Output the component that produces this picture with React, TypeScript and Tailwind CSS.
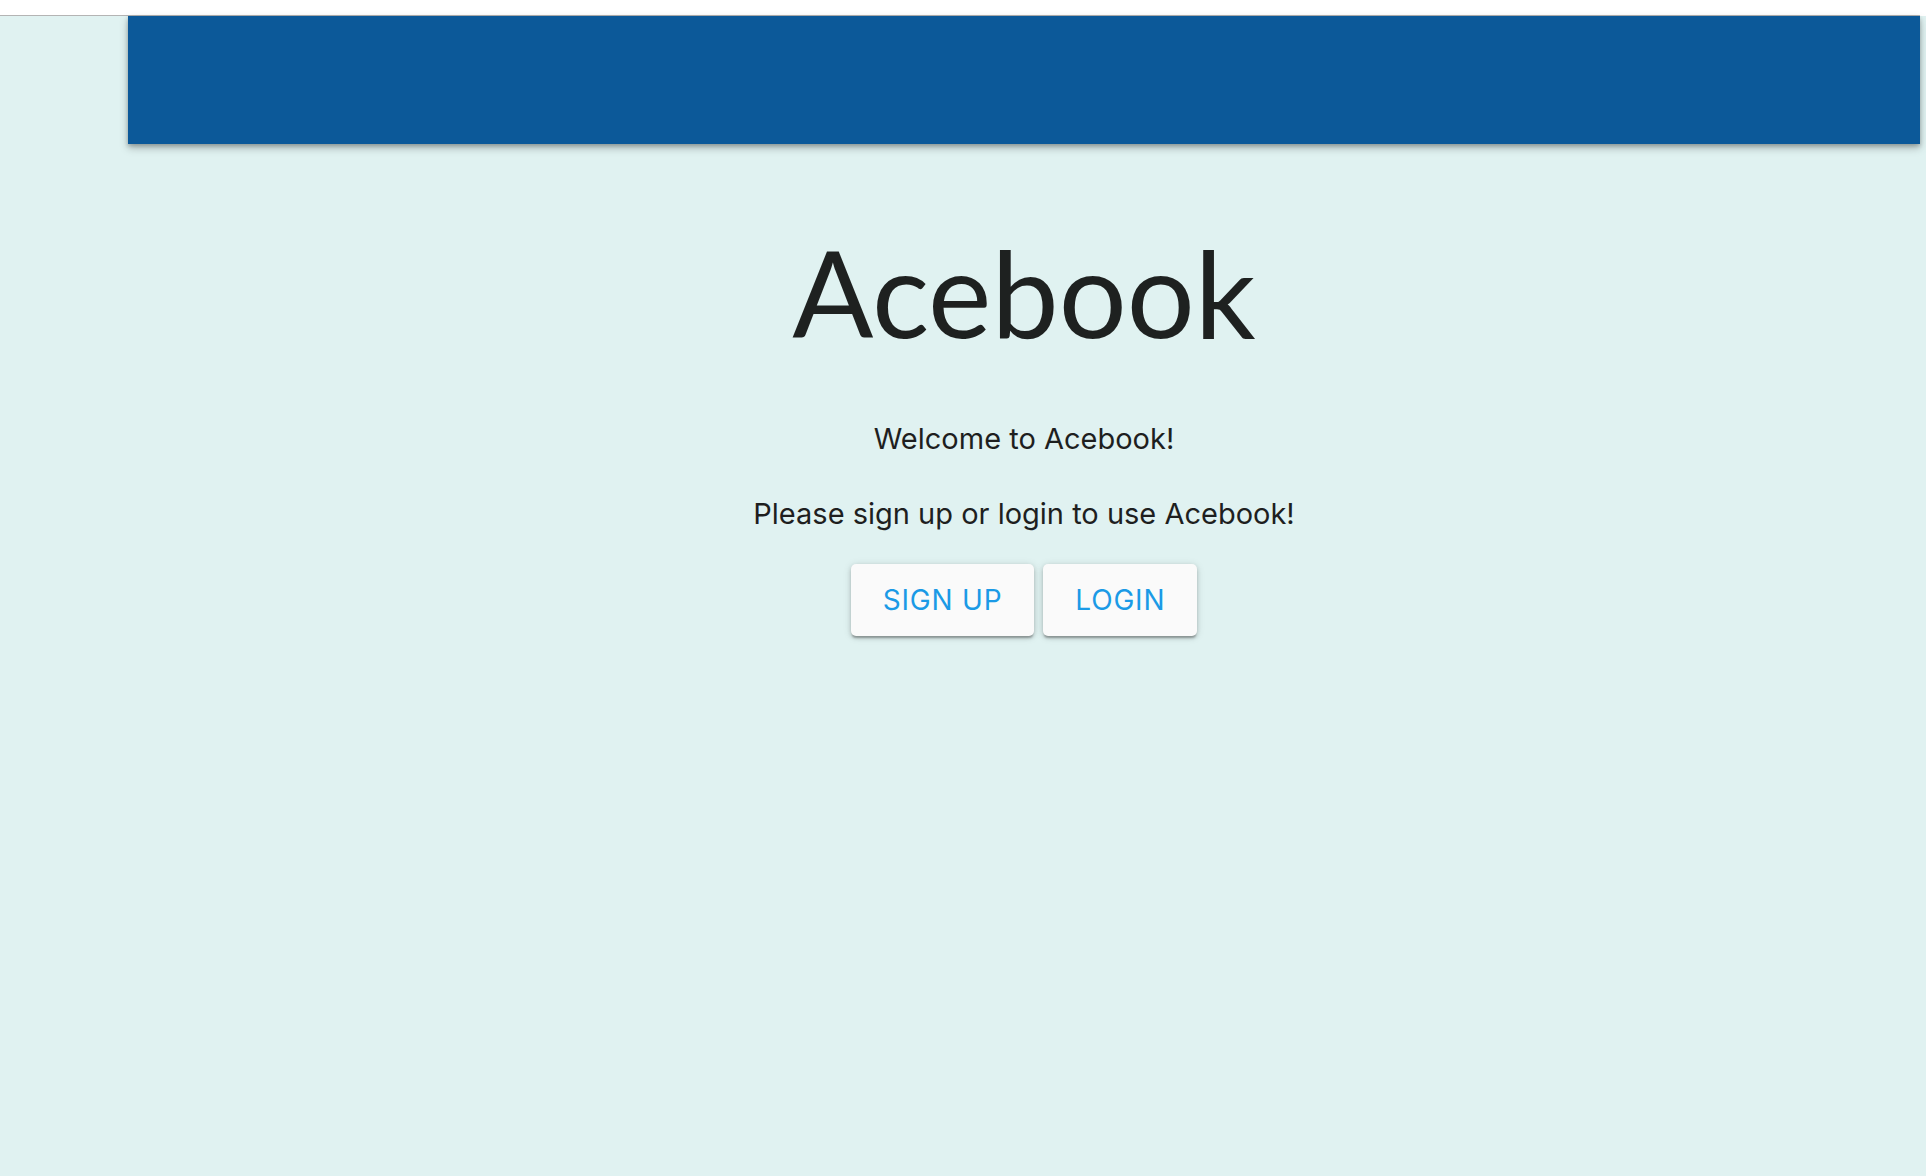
import React from "react";

export default function App() {
  return (
    <div className="min-h-screen w-full bg-[#e0f2f1] flex flex-col">
      <div className="h-[16px] w-full bg-white">
        <div className="h-full w-[1920px] border-b border-[#b4b4b4]" />
      </div>
      <div className="flex">
        <div className="w-[128px] shrink-0" />
        <header className="h-[128px] w-[1792px] bg-[#0c5999] shadow-[0_4px_8px_rgba(0,0,0,0.25),0_2px_4px_rgba(0,0,0,0.2)]" />
      </div>
      <main className="ml-[128px] w-[1792px] flex flex-col items-center pt-[88px]">
        <h1
          className="text-[120px] leading-[120px] text-[#1e2120] font-normal"
          style={{ fontFamily: "Lato, 'Noto Sans', sans-serif" }}
        >
          Acebook
        </h1>
        <p
          className="mt-[67px] text-[29px] leading-[40px] text-[#1e1f1f]"
          style={{ fontFamily: "Inter, 'Noto Sans', sans-serif" }}
        >
          Welcome to Acebook!
        </p>
        <p
          className="mt-[35px] text-[29px] leading-[40px] text-[#1e1f1f]"
          style={{ fontFamily: "Inter, 'Noto Sans', sans-serif" }}
        >
          Please sign up or login to use Acebook!
        </p>
        <div className="mt-[30px] flex gap-[9px]">
          <button
            className="h-[72px] px-[32px] rounded-[5px] bg-[#fafafa] text-[#1b9ae6] text-[28px] tracking-[0.8px] uppercase shadow-[0_3px_2px_-1px_rgba(0,0,0,0.25),0_2px_4px_0_rgba(0,0,0,0.16),0_1px_8px_0_rgba(0,0,0,0.12)]"
            style={{ fontFamily: "Inter, Roboto, sans-serif" }}
          >
            Sign Up
          </button>
          <button
            className="h-[72px] px-[32px] rounded-[5px] bg-[#fafafa] text-[#1b9ae6] text-[28px] tracking-[0.8px] uppercase shadow-[0_3px_2px_-1px_rgba(0,0,0,0.25),0_2px_4px_0_rgba(0,0,0,0.16),0_1px_8px_0_rgba(0,0,0,0.12)]"
            style={{ fontFamily: "Inter, Roboto, sans-serif" }}
          >
            Login
          </button>
        </div>
      </main>
    </div>
  );
}
